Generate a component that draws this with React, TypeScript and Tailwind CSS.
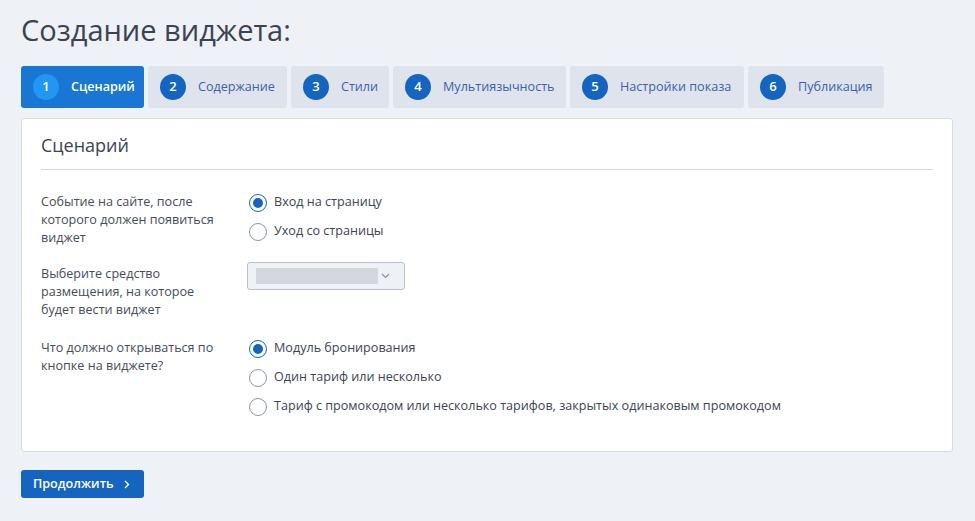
import React, { useState } from "react";

const steps = [
  { n: 1, name: "Сценарий", w: "w-[123px]" },
  { n: 2, name: "Содержание", w: "w-[139px]" },
  { n: 3, name: "Стили", w: "w-[98px]" },
  { n: 4, name: "Мультиязычность", w: "w-[173px]" },
  { n: 5, name: "Настройки показа", w: "w-[174px]" },
  { n: 6, name: "Публикация", w: "w-[136px]" },
];

const Radio = ({ checked, label, onClick }: { checked: boolean; label: string; onClick: () => void }) => (
  <label onClick={onClick} className="flex items-center gap-[7px] h-[29px] cursor-pointer">
    <span
      className={
        "flex items-center justify-center w-[18px] h-[18px] rounded-full border bg-white " +
        (checked ? "border-[#1565c0] border-[1.5px]" : "border-[#8a96a8]")
      }
    >
      {checked && <span className="w-[10px] h-[10px] rounded-full bg-[#1565c0]" />}
    </span>
    <span className="text-[12.6px] text-[#3c4450]">{label}</span>
  </label>
);

const Label = ({ children }: { children: React.ReactNode }) => (
  <div className="w-[180px] mr-[28px] text-[12.6px] leading-[18px] text-[#454c57]">{children}</div>
);

export default function App() {
  const [event, setEvent] = useState(0);
  const [target, setTarget] = useState(0);

  return (
    <div className="min-h-[521px] bg-[#eef1f5] px-[21px] pt-[10px] pb-6" style={{ fontFamily: '"Open Sans", "Noto Sans", sans-serif' }}>
      <h1 className="text-[29px] leading-[40px] text-[#3b4350] font-normal">Создание виджета:</h1>

      {/* Steps */}
      <div className="flex gap-[4px] mt-[16px]">
        {steps.map((s) => {
          const active = s.n === 1;
          return (
            <div
              key={s.n}
              className={
                "flex items-center h-[42px] pl-[12px] rounded-[3px] " +
                s.w +
                (active ? " bg-[#1976d2]" : " bg-[#dfe3eb]")
              }
            >
              <span
                className={
                  "flex items-center justify-center w-[26px] h-[26px] rounded-full text-[13px] font-semibold text-white " +
                  (active ? "bg-[#2196f3]" : "bg-[#1565c0]")
                }
              >
                {s.n}
              </span>
              <span className={"ml-[12px] text-[12.6px] " + (active ? "text-white font-semibold" : "text-[#3d5fae]")}>
                {s.name}
              </span>
            </div>
          );
        })}
      </div>

      {/* Panel */}
      <div className="mt-[10px] w-[932px] h-[334px] bg-white border border-[#d6dce6] rounded-[3px] px-[19px]">
        <div className="pt-[14px] pb-[12px] border-b border-[#d0d6e0]">
          <h2 className="text-[18px] leading-[24px] text-[#3b4350] font-normal">Сценарий</h2>
        </div>

        <div className="flex mt-[23px]">
          <Label>Событие на сайте, после которого должен появиться виджет</Label>
          <div className="-mt-[5px]">
            <Radio checked={event === 0} label="Вход на страницу" onClick={() => setEvent(0)} />
            <Radio checked={event === 1} label="Уход со страницы" onClick={() => setEvent(1)} />
          </div>
        </div>

        <div className="flex mt-[18px]">
          <Label>Выберите средство размещения, на которое будет вести виджет</Label>
          <div className="-mt-[3px] -ml-[2px]">
            <div className="flex items-center w-[158px] h-[28px] bg-[#eef1f5] border border-[#b7c0cc] rounded-[3px] pl-[8px] pr-[14px]">
              <div className="w-[122px] h-[16px] bg-[#d4d7dd] blur-[0.5px]" />
              <svg className="ml-auto" width="9" height="6" viewBox="0 0 9 6" fill="none">
                <path d="M1 1l3.5 3.5L8 1" stroke="#8a94a3" strokeWidth="1.2" />
              </svg>
            </div>
          </div>
        </div>

        <div className="flex mt-[20px]">
          <Label>Что должно открываться по кнопке на виджете?</Label>
          <div className="-mt-[5px]">
            <Radio checked={target === 0} label="Модуль бронирования" onClick={() => setTarget(0)} />
            <Radio checked={target === 1} label="Один тариф или несколько" onClick={() => setTarget(1)} />
            <Radio
              checked={target === 2}
              label="Тариф с промокодом или несколько тарифов, закрытых одинаковым промокодом"
              onClick={() => setTarget(2)}
            />
          </div>
        </div>
      </div>

      <button className="mt-[18px] flex items-center h-[28px] w-[123px] pl-[12px] bg-[#1565c0] rounded-[3px] text-white text-[12.6px] font-semibold">
        Продолжить
        <svg className="ml-[10px]" width="6" height="9" viewBox="0 0 6 9" fill="none">
          <path d="M1 1l3.5 3.5L1 8" stroke="white" strokeWidth="1.4" />
        </svg>
      </button>
    </div>
  );
}
